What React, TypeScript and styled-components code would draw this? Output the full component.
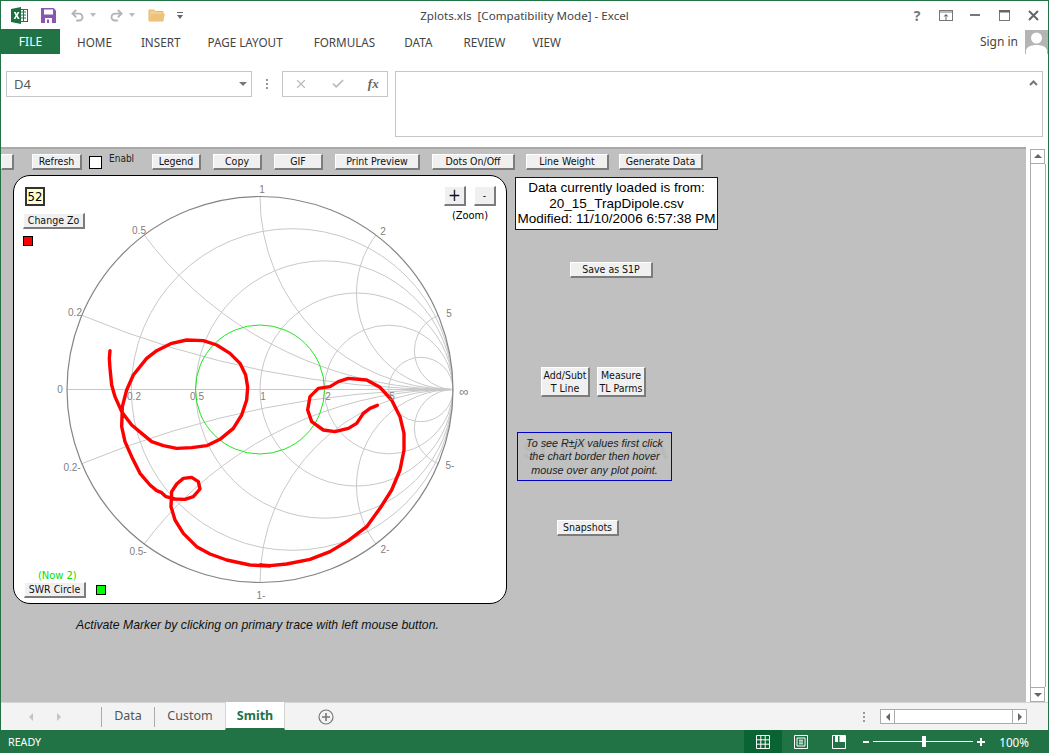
import React from "react";
import styled, { createGlobalStyle } from "styled-components";
import { Undo2, Redo2, X, Check } from "lucide-react";

const Global = createGlobalStyle`
  html, body { margin: 0; padding: 0; background: #fff; overflow: hidden; }
  * { box-sizing: border-box; }
`;

const UI_FONT = `"Noto Sans", "Open Sans", sans-serif`;
const FORM_FONT = `"DejaVu Sans", "Liberation Sans", sans-serif`;
const ARIAL = `"Liberation Sans", Arial, sans-serif`;

const Window = styled.div`
  display: flex;
  flex-direction: column;
  width: 1049px;
  height: 753px;
  border: 1px solid #217346;
  border-bottom: none;
  background: #fff;
  font-family: ${UI_FONT};
  color: #444;
`;

const TitleBar = styled.div`
  position: relative;
  display: flex;
  align-items: center;
  height: 28px;
  padding-left: 10px;
  flex: none;
`;

const QuickAccess = styled.div`
  display: flex;
  align-items: center;
`;

const Title = styled.div`
  position: absolute;
  left: 0;
  right: 0;
  top: 6px;
  text-align: center;
  font-size: 11.6px;
  line-height: 18px;
  white-space: pre;
  color: #444;
`;

const WinControls = styled.div`
  margin-left: auto;
  display: flex;
  align-items: center;
  height: 100%;
`;

const RibbonRow = styled.div`
  display: flex;
  align-items: center;
  height: 25px;
  flex: none;
`;

const FileTab = styled.div`
  width: 59px;
  height: 25px;
  background: #217346;
  color: #fff;
  font-size: 12px;
  line-height: 25px;
  text-align: center;
`;

const RibbonTab = styled.div`
  font-size: 11.7px;
  margin-left: ${(p: { $ml: number }) => p.$ml}px;
  color: #444;
`;

const SignIn = styled.div`
  margin-left: auto;
  display: flex;
  align-items: center;
  font-size: 12px;
  gap: 7px;
  height: 25px;
`;

const Avatar = styled.div`
  width: 23px;
  height: 24px;
  background: #b4b4b4;
  overflow: hidden;
`;

const FormulaBar = styled.div`
  display: flex;
  align-items: flex-start;
  height: 93px;
  padding: 17px 5px 0 5px;
  flex: none;
`;

const NameBox = styled.div`
  position: relative;
  width: 246px;
  height: 26px;
  border: 1px solid #c6c6c6;
  padding-left: 7px;
  font-size: 13px;
  line-height: 25px;
  color: #5a5a5a;
`;

const DownCaret = styled.div`
  position: absolute;
  right: 4px;
  top: 10px;
  width: 0;
  height: 0;
  border-left: 4px solid transparent;
  border-right: 4px solid transparent;
  border-top: 4px solid #777;
`;

const Grip = styled.div`
  width: 30px;
  height: 26px;
  display: flex;
  flex-direction: column;
  align-items: center;
  justify-content: center;
  gap: 2px;
  span {
    width: 2px;
    height: 2px;
    background: #999;
  }
`;

const FxBox = styled.div`
  display: flex;
  align-items: center;
  justify-content: space-between;
  width: 106px;
  height: 26px;
  border: 1px solid #c6c6c6;
  color: #bbb;
  padding: 0 8px 0 11px;
`;

const Fx = styled.span`
  font-family: "Liberation Serif", serif;
  font-style: italic;
  font-weight: 700;
  font-size: 13px;
  color: #666;
`;

const FormulaInput = styled.div`
  position: relative;
  width: 649px;
  height: 66px;
  margin-left: 7px;
  border: 1px solid #c6c6c6;
`;

const UpCaret = styled.svg`
  position: absolute;
  right: 4px;
  top: 8px;
`;

const Workspace = styled.div`
  display: flex;
  flex: 1;
  min-height: 0;
`;

const Sheet = styled.div`
  width: 1025px;
  background: #c0c0c0;
  border-top: 2px solid #a9a9a9;
  padding-top: 5px;
  display: flex;
  flex-direction: column;
  font-family: ${FORM_FONT};
  color: #000;
`;

const ToolStrip = styled.div`
  display: flex;
  align-items: center;
  height: 16px;
  flex: none;
`;

const FormButton = styled.div<{ $w: number; $h?: number; $ml?: number; $mt?: number; $big?: boolean }>`
  flex: none;
  display: flex;
  align-items: center;
  justify-content: center;
  text-align: center;
  width: ${(p) => p.$w}px;
  height: ${(p) => p.$h ?? 16}px;
  margin-left: ${(p) => p.$ml ?? 0}px;
  margin-top: ${(p) => p.$mt ?? 0}px;
  background: #f0f0f0;
  border-top: 1px solid #fff;
  border-left: 1px solid #fff;
  border-right: 2px solid #7c7c7c;
  border-bottom: 2px solid #7c7c7c;
  font-size: ${(p) => (p.$big ? "17px" : "10.5px")};
  font-stretch: condensed;
  line-height: 13px;
  white-space: pre;
  color: #111;
`;

const CheckBox = styled.div`
  flex: none;
  width: 13px;
  height: 13px;
  margin-left: 7px;
  background: #fff;
  border: 1px solid #000;
`;

const SmallLabel = styled.div`
  flex: none;
  width: 28px;
  margin-left: 7px;
  margin-top: -7px;
  font-size: 10px;
  font-stretch: condensed;
  color: #222;
`;

const SheetBody = styled.div`
  display: flex;
  align-items: flex-start;
  padding-left: 12px;
  margin-top: 5px;
`;

const LeftColumn = styled.div`
  display: flex;
  flex-direction: column;
  flex: none;
`;

const ChartPanel = styled.div`
  position: relative;
  width: 494px;
  height: 429px;
  border: 1px solid #000;
  border-radius: 17px;
  background: #fff;
  overflow: hidden;
  svg {
    display: block;
  }
`;

const TopLeftTools = styled.div`
  position: absolute;
  left: 9px;
  top: 11px;
  display: flex;
  flex-direction: column;
  align-items: flex-start;
`;

const ZoBox = styled.div`
  margin-left: 2px;
  width: 20px;
  height: 19px;
  background: #ffffcc;
  border: 2px solid #333;
  font-size: 13px;
  font-stretch: condensed;
  line-height: 15px;
  text-align: center;
`;

const Swatch = styled.div<{ $color: string; $ml?: number; $mt?: number }>`
  flex: none;
  width: 10px;
  height: 10px;
  margin-left: ${(p) => p.$ml ?? 0}px;
  margin-top: ${(p) => p.$mt ?? 0}px;
  background: ${(p) => p.$color};
  border: 1px solid #000;
`;

const ZoomTools = styled.div`
  position: absolute;
  left: 430px;
  top: 10px;
  width: 52px;
  display: flex;
  flex-wrap: wrap;
  justify-content: space-between;
`;

const ZoomCaption = styled.div`
  width: 100%;
  margin-top: 3px;
  text-align: center;
  font-size: 11px;
  font-stretch: condensed;
  line-height: 13px;
`;

const SwrTools = styled.div`
  position: absolute;
  left: 10px;
  top: 393px;
  display: flex;
  flex-wrap: wrap;
  align-items: center;
  width: 90px;
`;

const SwrCaption = styled.div`
  width: 100%;
  padding-left: 14px;
  color: #00e000;
  font-size: 11px;
  font-stretch: condensed;
  line-height: 13px;
`;

const MarkerNote = styled.div`
  margin: 14px 0 0 63px;
  font-family: ${ARIAL};
  font-style: italic;
  font-size: 12.25px;
  line-height: 14px;
  color: #111;
  white-space: nowrap;
`;

const RightColumn = styled.div`
  display: flex;
  flex-direction: column;
  align-items: flex-start;
  flex: none;
  padding: 2px 0 0 8px;
`;

const DataBox = styled.div`
  width: 203px;
  height: 53px;
  padding-top: 2px;
  border: 1px solid #0000e0;
  background: #fff;
  font-family: ${ARIAL};
  font-size: 13.5px;
  line-height: 15.5px;
  text-align: center;
  white-space: nowrap;
  overflow: hidden;
`;

const ButtonPair = styled.div`
  display: flex;
  gap: 7px;
  margin: 89px 0 0 26px;
`;

const HoverNote = styled.div`
  position: relative;
  margin: 35px 0 0 2px;
  width: 155px;
  height: 49px;
  padding-top: 4px;
  border: 1px solid #0000c8;
  font-family: ${ARIAL};
  font-style: italic;
  font-size: 10.8px;
  line-height: 13.3px;
  text-align: center;
  white-space: pre;
  color: #222;
`;

const NoteText = styled.div`
  position: relative;
`;

const Watermark = styled.div`
  position: absolute;
  left: 5px;
  top: 4px;
  font-style: normal;
  font-weight: bold;
  font-size: 24px;
  line-height: 28px;
  letter-spacing: 1px;
  color: #b9b9b9;
`;

const WatermarkUrl = styled.div`
  position: absolute;
  left: 38px;
  top: 34px;
  font-style: normal;
  font-size: 8px;
  line-height: 10px;
  color: #cdcdcd;
`;

const VScroll = styled.div`
  flex: none;
  width: 22px;
  display: flex;
  flex-direction: column;
  padding: 2px 2px 0 4px;
  background: #fff;
`;

const ScrollBtn = styled.div`
  flex: none;
  display: flex;
  align-items: center;
  justify-content: center;
  width: 15px;
  height: 15px;
  border: 1px solid #ababab;
  background: #fff;
`;

const VTrack = styled.div`
  flex: 1;
  border-left: 1px solid #ababab;
  border-right: 1px solid #ababab;
`;

const TabBar = styled.div`
  position: relative;
  display: flex;
  align-items: center;
  height: 28px;
  flex: none;
  background: #f3f3f3;
  border-top: 1px solid #d4d4d4;
`;

const NavArrows = styled.div`
  display: flex;
  align-items: center;
  justify-content: space-between;
  width: 36px;
  margin-left: 26px;
`;

const SheetTab = styled.div<{ $active?: boolean; $w: number; $ml?: number }>`
  display: flex;
  align-items: center;
  justify-content: center;
  width: ${(p) => p.$w}px;
  height: ${(p) => (p.$active ? "28px" : "20px")};
  margin-left: ${(p) => p.$ml ?? 0}px;
  margin-top: ${(p) => (p.$active ? "-1px" : "0")};
  padding-bottom: ${(p) => (p.$active ? "0" : "2px")};
  font-size: 12.5px;
  font-weight: ${(p) => (p.$active ? 700 : 400)};
  color: ${(p) => (p.$active ? "#217346" : "#555")};
  background: ${(p) => (p.$active ? "#fff" : "transparent")};
  border-left: 1px solid ${(p) => (p.$active ? "#d4d4d4" : "#ababab")};
  border-right: ${(p) => (p.$active ? "1px solid #d4d4d4" : "none")};
  border-bottom: ${(p) => (p.$active ? "2px solid #217346" : "none")};
`;

const AddSheet = styled.div`
  margin-left: 33px;
  display: flex;
`;

const HScrollArea = styled.div`
  margin-left: auto;
  display: flex;
  align-items: center;
  margin-right: 21px;
`;

const HGrip = styled(Grip)`
  width: 16px;
  margin-right: 8px;
`;

const HTrack = styled.div`
  width: 117px;
  height: 15px;
  border-top: 1px solid #ababab;
  border-bottom: 1px solid #ababab;
  background: #fff;
`;

const StatusBar = styled.div`
  display: flex;
  align-items: center;
  height: 23px;
  flex: none;
  margin: 0 -1px;
  background: #217346;
  color: #fff;
  font-size: 10.7px;
  padding-left: 8px;
`;

const StatusRight = styled.div`
  margin-left: auto;
  display: flex;
  align-items: center;
  height: 100%;
`;

const ViewBtn = styled.div<{ $active?: boolean }>`
  display: flex;
  align-items: center;
  justify-content: center;
  width: 38px;
  height: 100%;
  background: ${(p) => (p.$active ? "#0a6332" : "transparent")};
`;

const ZoomSlider = styled.div`
  position: relative;
  width: 100px;
  height: 1px;
  margin: 0 4px;
  background: #fff;
`;

const ZoomThumb = styled.div`
  position: absolute;
  left: 49px;
  top: -5px;
  width: 4px;
  height: 11px;
  background: #fff;
`;

const ZoomPct = styled.div`
  margin: 0 20px 0 14px;
  font-size: 11.7px;
`;

const ZoomMinus = styled.svg`
  margin-left: 5px;
`;

const CX = 260;
const CY = 389.5;
const R = 193;
const VALUES = [0.2, 0.5, 1, 2, 5];

const gridLabels: [string, number, number, number][] = [
  ["1", 262, 193, 10], ["0.5", 139, 234, 10], ["2", 383, 235, 10], ["0.2", 75, 316, 10], ["5", 449, 317, 10],
  ["0", 60, 393, 10], ["∞", 464, 396, 13], ["0.2", 134, 400, 10], ["0.5", 197, 400, 10], ["1", 263, 400, 10],
  ["2", 328, 400, 10], ["5", 392, 400, 10], ["0.2-", 72, 471, 10], ["5-", 450, 469, 10], ["0.5-", 138, 555, 10],
  ["2-", 385, 553, 10], ["1-", 261, 599, 10],
];

// traced off the reference at 3x: first half from (60,300), second half from (260,300)
const traceA = [
  [150, 152], [148, 175], [150, 205], [155, 255], [165, 290], [185, 335], [215, 375], [245, 400], [275, 425],
  [310, 437], [350, 445], [395, 443], [440, 437], [480, 418], [520, 385], [545, 345], [560, 300], [563, 262],
  [557, 225], [540, 190], [510, 160], [470, 135], [430, 122], [380, 120], [335, 130], [290, 152], [260, 175],
  [220, 225], [200, 270], [187, 320], [185, 380], [195, 425], [215, 470], [240, 520], [270, 555], [290, 572],
  [305, 578], [318, 590], [345, 597], [375, 598], [400, 590], [420, 567], [415, 545], [395, 532], [370, 535],
  [350, 552], [335, 575], [333, 620], [345, 660], [370, 700], [410, 740], [450, 762], [500, 780], [570, 795],
  [630, 798],
];
const traceB = [
  [0, 795], [30, 797], [80, 792], [150, 778], [210, 755], [265, 722], [320, 680], [360, 625], [395, 570],
  [420, 510], [432, 450], [432, 400], [420, 350], [395, 300], [360, 262], [320, 240], [265, 235], [235, 245],
  [210, 260], [175, 265], [150, 290], [143, 330], [155, 365], [190, 390], [225, 395], [265, 385], [290, 370],
  [310, 340], [330, 325], [352, 316],
];
const tracePoints = [
  ...traceA.map(([x, y]) => `${60 + x / 3},${300 + y / 3}`),
  ...traceB.map(([x, y]) => `${260 + x / 3},${300 + y / 3}`),
].join(" ");

const SmithChart = () => (
  <svg width={492} height={427} viewBox="14 176 492 427">
    <defs>
      <clipPath id="unit">
        <circle cx={CX} cy={CY} r={R} />
      </clipPath>
    </defs>
    <g clipPath="url(#unit)" fill="none" stroke="#c8c8c8" strokeWidth={1}>
      <line x1={CX - R} y1={CY} x2={CX + R} y2={CY} />
      {VALUES.map((v) => (
        <circle key={`r${v}`} cx={CX + (R * v) / (1 + v)} cy={CY} r={R / (1 + v)} />
      ))}
      {VALUES.map((v) => (
        <React.Fragment key={`x${v}`}>
          <circle cx={CX + R} cy={CY - R / v} r={R / v} />
          <circle cx={CX + R} cy={CY + R / v} r={R / v} />
        </React.Fragment>
      ))}
    </g>
    <circle cx={CX} cy={CY} r={R} fill="none" stroke="#858585" strokeWidth={1.2} />
    <circle cx={CX} cy={CY} r={64.5} fill="none" stroke="#1ee61e" strokeWidth={1} />
    <polyline points={tracePoints} fill="none" stroke="#ff0000" strokeWidth={3.4} strokeLinejoin="round" strokeLinecap="round" />
    {gridLabels.map(([t, x, y, size], i) => (
      <text key={i} x={x} y={y} textAnchor="middle" fontFamily={ARIAL} fontSize={size} fill="#808080">
        {t}
      </text>
    ))}
  </svg>
);

const ExcelLogo = () => (
  <svg width="17" height="17" viewBox="0 0 17 17">
    <rect x="8" y="2.5" width="8.5" height="12" fill="#fff" stroke="#217346" />
    <path d="M10 5h5M10 8h5M10 11h5M12.5 3v11" stroke="#217346" strokeWidth="1" />
    <path d="M0 2l10-2v17L0 15z" fill="#1f6e43" />
    <path d="M2.8 5h1.9l.9 2 1-2h1.8L6.7 8.4 8.6 12H6.7l-1.1-2.2L4.5 12H2.6l2-3.6z" fill="#fff" />
  </svg>
);

const SaveSvg = styled.svg`
  margin-left: 13px;
`;

const SaveIcon = () => (
  <SaveSvg width="15" height="15" viewBox="0 0 15 15">
    <path d="M0 0h12.5L15 2.5V15H0z" fill="#8a57b0" />
    <rect x="3" y="1.5" width="9" height="5" fill="#fff" />
    <rect x="4" y="10" width="7" height="5" fill="#fff" />
    <rect x="6" y="11.5" width="2" height="3.5" fill="#8a57b0" />
  </SaveSvg>
);

const CaretSvg = styled.svg`
  margin-left: 5px;
`;

const Caret = () => (
  <CaretSvg width="6" height="4" viewBox="0 0 6 4">
    <path d="M0 0h6L3 4z" fill="#bbb" />
  </CaretSvg>
);

const FolderSvg = styled.svg`
  margin-left: 13px;
`;

const FolderIcon = () => (
  <FolderSvg width="17" height="14" viewBox="0 0 17 14">
    <path d="M1 13V2h5l1.5 1.5H15V13z" fill="#f0d08f" stroke="#e4b76b" />
    <path d="M1 13l2.5-7H17l-2 7z" fill="#eec27a" />
  </FolderSvg>
);

const CustomizeSvg = styled.svg`
  margin-left: 12px;
`;

const CustomizeIcon = () => (
  <CustomizeSvg width="6" height="7" viewBox="0 0 6 7">
    <path d="M0 0h6v1H0zM0 3h6L3 7z" fill="#666" />
  </CustomizeSvg>
);

const UndoIcon = styled(Undo2)`
  margin-left: 14px;
`;

const RedoIcon = styled(Redo2)`
  margin-left: 13px;
`;

const HelpGlyph = styled.span`
  width: 20px;
  margin-right: 12px;
  text-align: center;
  font-weight: 700;
  font-size: 14px;
  color: #777;
`;

const ControlSlot = styled.div<{ $w: number; $ml?: number }>`
  display: flex;
  align-items: center;
  justify-content: center;
  width: ${(p) => p.$w}px;
  margin-left: ${(p) => p.$ml ?? 0}px;
`;

const ArrowBtn = ({ dir, color = "#666" }: { dir: "up" | "down" | "left" | "right"; color?: string }) => {
  const paths = { up: "M0 5L4 1l4 4z", down: "M0 2h8L4 6z", left: "M6 0v8L2 4z", right: "M2 0v8l4-4z" };
  return (
    <svg width="8" height="8" viewBox="0 0 8 8">
      <path d={paths[dir]} fill={color} />
    </svg>
  );
};

export default function App() {
  return (
    <>
      <Global />
      <Window>
        <TitleBar>
          <QuickAccess>
            <ExcelLogo />
            <SaveIcon />
            <UndoIcon size={15} color="#b4b4b4" strokeWidth={3} />
            <Caret />
            <RedoIcon size={15} color="#b4b4b4" strokeWidth={3} />
            <Caret />
            <FolderIcon />
            <CustomizeIcon />
          </QuickAccess>
          <Title>{"Zplots.xls  [Compatibility Mode] - Excel"}</Title>
          <WinControls>
            <HelpGlyph>?</HelpGlyph>
            <ControlSlot $w={14}>
              <svg width="14" height="11" viewBox="0 0 14 11">
                <rect x=".5" y=".5" width="13" height="10" fill="none" stroke="#777" />
                <path d="M1 2h12" stroke="#777" />
                <path d="M7 4L4.5 6.5h5zM6.5 6h1v4h-1z" fill="#666" />
              </svg>
            </ControlSlot>
            <ControlSlot $w={44}>
              <svg width="10" height="2" viewBox="0 0 10 2">
                <rect width="10" height="2" fill="#777" />
              </svg>
            </ControlSlot>
            <ControlSlot $w={14}>
              <svg width="11" height="11" viewBox="0 0 11 11">
                <rect x=".5" y=".5" width="10" height="10" fill="none" stroke="#777" />
                <rect width="11" height="2.5" fill="#666" />
              </svg>
            </ControlSlot>
            <ControlSlot $w={30} $ml={7}>
              <svg width="11" height="11" viewBox="0 0 11 11">
                <path d="M1 1l9 9M10 1l-9 9" stroke="#666" strokeWidth="2" />
              </svg>
            </ControlSlot>
          </WinControls>
        </TitleBar>
        <RibbonRow>
          <FileTab>FILE</FileTab>
          <RibbonTab $ml={17}>HOME</RibbonTab>
          <RibbonTab $ml={29}>INSERT</RibbonTab>
          <RibbonTab $ml={27}>PAGE LAYOUT</RibbonTab>
          <RibbonTab $ml={31}>FORMULAS</RibbonTab>
          <RibbonTab $ml={29}>DATA</RibbonTab>
          <RibbonTab $ml={31}>REVIEW</RibbonTab>
          <RibbonTab $ml={27}>VIEW</RibbonTab>
          <SignIn>
            Sign in
            <Avatar>
              <svg width="23" height="24" viewBox="0 0 23 24">
                <circle cx="11.5" cy="8" r="5.5" fill="#fff" />
                <path d="M1 24v-3c0-4 5-6 10.5-6S22 17 22 21v3z" fill="#fff" />
              </svg>
            </Avatar>
          </SignIn>
        </RibbonRow>
        <FormulaBar>
          <NameBox>
            D4
            <DownCaret />
          </NameBox>
          <Grip>
            <span />
            <span />
            <span />
          </Grip>
          <FxBox>
            <X size={14} strokeWidth={2} />
            <Check size={14} strokeWidth={3} />
            <Fx>fx</Fx>
          </FxBox>
          <FormulaInput>
            <UpCaret width="9" height="6" viewBox="0 0 9 6">
              <path d="M1 5l3.5-3.5L8 5" fill="none" stroke="#777" strokeWidth="2" />
            </UpCaret>
          </FormulaInput>
        </FormulaBar>
        <Workspace>
          <Sheet>
            <ToolStrip>
              <FormButton $w={13} />
              <FormButton $w={50} $ml={18}>Refresh</FormButton>
              <CheckBox />
              <SmallLabel>Enabl</SmallLabel>
              <FormButton $w={49} $ml={15}>Legend</FormButton>
              <FormButton $w={49} $ml={12}>Copy</FormButton>
              <FormButton $w={49} $ml={12}>GIF</FormButton>
              <FormButton $w={85} $ml={12}>Print Preview</FormButton>
              <FormButton $w={83} $ml={12}>Dots On/Off</FormButton>
              <FormButton $w={83} $ml={11}>Line Weight</FormButton>
              <FormButton $w={84} $ml={10}>Generate Data</FormButton>
            </ToolStrip>
            <SheetBody>
              <LeftColumn>
                <ChartPanel>
                  <SmithChart />
                  <TopLeftTools>
                    <ZoBox>52</ZoBox>
                    <FormButton $w={62} $mt={7}>Change Zo</FormButton>
                    <Swatch $color="#ff0000" $mt={7} />
                  </TopLeftTools>
                  <ZoomTools>
                    <FormButton $w={22} $h={20} $big>+</FormButton>
                    <FormButton $w={22} $h={20}>-</FormButton>
                    <ZoomCaption>(Zoom)</ZoomCaption>
                  </ZoomTools>
                  <SwrTools>
                    <SwrCaption>(Now 2)</SwrCaption>
                    <FormButton $w={62}>SWR Circle</FormButton>
                    <Swatch $color="#00ff00" $ml={10} />
                  </SwrTools>
                </ChartPanel>
                <MarkerNote>Activate Marker by clicking on primary trace with left mouse button.</MarkerNote>
              </LeftColumn>
              <RightColumn>
                <DataBox>
                  Data currently loaded is from:
                  <br />
                  20_15_TrapDipole.csv
                  <br />
                  Modified: 11/10/2006 6:57:38 PM
                </DataBox>
                <FormButton $w={83} $ml={55} $mt={32}>Save as S1P</FormButton>
                <ButtonPair>
                  <FormButton $w={49} $h={30}>{"Add/Subt\nT Line"}</FormButton>
                  <FormButton $w={49} $h={30}>{"Measure\nTL Parms"}</FormButton>
                </ButtonPair>
                <HoverNote>
                  <Watermark>SOFTPEDIA</Watermark>
                  <WatermarkUrl>www.softpedia.com</WatermarkUrl>
                  <NoteText>{"To see R±jX values first click\nthe chart border then hover\nmouse over any plot point."}</NoteText>
                </HoverNote>
                <FormButton $w={62} $ml={42} $mt={39}>Snapshots</FormButton>
              </RightColumn>
            </SheetBody>
          </Sheet>
          <VScroll>
            <ScrollBtn>
              <ArrowBtn dir="up" />
            </ScrollBtn>
            <VTrack />
            <ScrollBtn>
              <ArrowBtn dir="down" />
            </ScrollBtn>
          </VScroll>
        </Workspace>
        <TabBar>
          <NavArrows>
            <ArrowBtn dir="left" color="#c4c4c4" />
            <ArrowBtn dir="right" color="#c4c4c4" />
          </NavArrows>
          <SheetTab $w={53} $ml={38}>Data</SheetTab>
          <SheetTab $w={71}>Custom</SheetTab>
          <SheetTab $active $w={60}>Smith</SheetTab>
          <AddSheet>
            <svg width="16" height="16" viewBox="0 0 16 16">
              <circle cx="8" cy="8" r="7" fill="none" stroke="#777" strokeWidth="1.2" />
              <path d="M8 4v8M4 8h8" stroke="#777" strokeWidth="1.6" />
            </svg>
          </AddSheet>
          <HScrollArea>
            <HGrip>
              <span />
              <span />
              <span />
            </HGrip>
            <ScrollBtn>
              <ArrowBtn dir="left" />
            </ScrollBtn>
            <HTrack />
            <ScrollBtn>
              <ArrowBtn dir="right" />
            </ScrollBtn>
          </HScrollArea>
        </TabBar>
        <StatusBar>
          READY
          <StatusRight>
            <ViewBtn $active>
              <svg width="14" height="14" viewBox="0 0 14 14">
                <path d="M.5.5h13v13H.5zM.5 4.8h13M.5 9.2h13M4.8.5v13M9.2.5v13" fill="none" stroke="#fff" />
              </svg>
            </ViewBtn>
            <ViewBtn>
              <svg width="14" height="14" viewBox="0 0 14 14">
                <path d="M.5.5h13v13H.5zM3 3h8v8H3zM5 5.2h4M5 7h4M5 8.8h4" fill="none" stroke="#fff" />
              </svg>
            </ViewBtn>
            <ViewBtn>
              <svg width="14" height="14" viewBox="0 0 14 14">
                <path d="M.5.5h13v13H.5z" fill="none" stroke="#fff" />
                <path d="M3 1h3v6H3zM7.5 1H13v6H7.5z" fill="#fff" />
              </svg>
            </ViewBtn>
            <ZoomMinus width="6" height="2" viewBox="0 0 6 2">
              <rect width="6" height="2" fill="#fff" />
            </ZoomMinus>
            <ZoomSlider>
              <ZoomThumb />
            </ZoomSlider>
            <svg width="8" height="8" viewBox="0 0 8 8">
              <path d="M3 0h2v3h3v2H5v3H3V5H0V3h3z" fill="#fff" />
            </svg>
            <ZoomPct>100%</ZoomPct>
          </StatusRight>
        </StatusBar>
      </Window>
    </>
  );
}
